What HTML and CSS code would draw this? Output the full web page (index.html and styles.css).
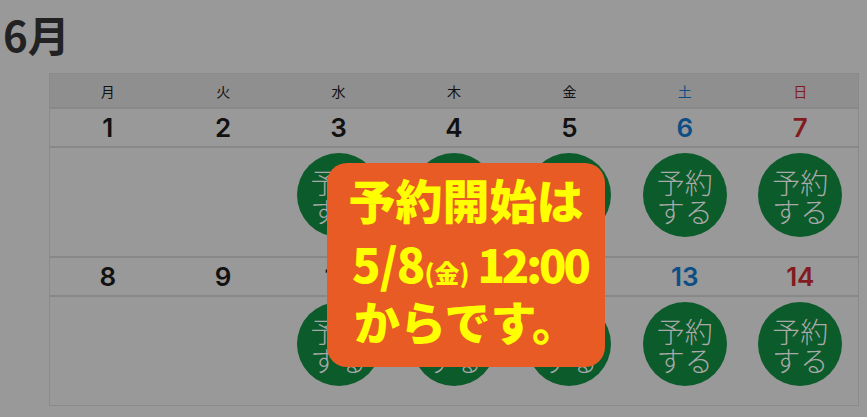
FILE: index.html
```html
<!DOCTYPE html>
<html lang="ja">
<head>
<meta charset="utf-8">
<link rel="stylesheet" href="styles.css">
</head>
<body>
<div class="page">
  <h1 class="title">6月</h1>
  <div class="calendar">
    <div class="row head">
      <div class="cell">月</div><div class="cell">火</div><div class="cell">水</div><div class="cell">木</div><div class="cell">金</div><div class="cell sat">土</div><div class="cell sun">日</div>
    </div>
    <div class="row dates">
      <div class="cell">1</div><div class="cell">2</div><div class="cell">3</div><div class="cell">4</div><div class="cell">5</div><div class="cell sat">6</div><div class="cell sun">7</div>
    </div>
    <div class="row slots">
      <div class="cell"></div><div class="cell"></div>
      <div class="cell"><span class="btn">予約<br>する</span></div>
      <div class="cell"><span class="btn">予約<br>する</span></div>
      <div class="cell"><span class="btn">予約<br>する</span></div>
      <div class="cell"><span class="btn">予約<br>する</span></div>
      <div class="cell"><span class="btn">予約<br>する</span></div>
    </div>
    <div class="row dates">
      <div class="cell">8</div><div class="cell">9</div><div class="cell">10</div><div class="cell">11</div><div class="cell">12</div><div class="cell sat">13</div><div class="cell sun">14</div>
    </div>
    <div class="row slots last">
      <div class="cell"></div><div class="cell"></div>
      <div class="cell"><span class="btn">予約<br>する</span></div>
      <div class="cell"><span class="btn">予約<br>する</span></div>
      <div class="cell"><span class="btn">予約<br>する</span></div>
      <div class="cell"><span class="btn">予約<br>する</span></div>
      <div class="cell"><span class="btn">予約<br>する</span></div>
    </div>
  </div>
  <div class="notice">
    <p class="l1">予約開始は</p>
    <p class="l2"><span class="date">5/8</span><span class="small">(金)</span><span class="time">12:00</span></p>
    <p class="l3">からです。</p>
  </div>
</div>
</body>
</html>
```

FILE: styles.css
```css
html, body {
  margin: 0;
  padding: 0;
  background: #999999;
  width: 867px;
  height: 417px;
  overflow: hidden;
}
.page {
  position: relative;
  display: flex;
  flex-direction: column;
  padding: 13px 0 0 3px;
  font-family: "Noto Sans CJK JP", "Noto Sans", sans-serif;
}
.title {
  margin: 0;
  font-size: 42px;
  line-height: 42px;
  font-weight: 700;
  color: #222222;
}
.calendar {
  margin: 18px 0 0 46px;
  width: 808px;
  border: 1px solid #8a8a8a;
}
.row {
  display: grid;
  grid-template-columns: repeat(7, 1fr);
  border-bottom: 2px solid #888888;
}
.row.last { border-bottom: none; }
.cell {
  display: flex;
  justify-content: center;
  align-items: center;
  color: #111111;
}
.head { background: #8f8f8f; height: 33px; }
.head .cell { font-size: 14px; }
.dates { height: 37px; }
.dates .cell {
  font-family: "Inter", "Noto Sans", sans-serif;
  font-size: 26px;
  font-weight: 600;
}
.sat { color: #0d4f85; }
.sun { color: #821b1f; }
.slots { height: 108px; }
.slots .cell { align-items: flex-start; padding-top: 5px; }
.btn {
  width: 84px;
  height: 84px;
  border-radius: 50%;
  background: #0b5b2b;
  color: #a9a9a9;
  display: flex;
  align-items: center;
  justify-content: center;
  text-align: center;
  font-size: 28px;
  font-weight: 300;
  line-height: 29px;
  padding-top: 3px;
  box-sizing: border-box;
}
.notice {
  position: absolute;
  left: 327px;
  top: 163px;
  width: 278px;
  height: 204px;
  box-sizing: border-box;
  padding-top: 5px;
  border-radius: 20px;
  background: #e85b24;
  color: #ffff00;
  display: flex;
  flex-direction: column;
  align-items: center;
  font-weight: 900;
}
.notice p { margin: 0; text-align: center; white-space: nowrap; }
.l1 { font-size: 47px; line-height: 62px; }
.l2 { font-size: 47px; line-height: 66px; height: 66px; margin-top: 7px; padding-left: 8px; }
.l2 .date { letter-spacing: -1px; }
.l2 .time { font-size: 45px; letter-spacing: -3px; margin-left: 8px; }
.l2 .small { font-size: 25px; line-height: 1; }
.l3 { font-size: 46px; line-height: 48px; margin-top: -9px; }
```
